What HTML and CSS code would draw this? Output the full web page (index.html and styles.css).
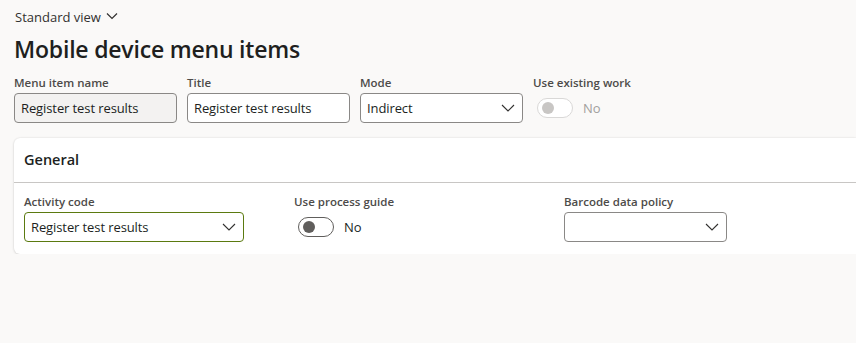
FILE: index.html
```html
<!DOCTYPE html>
<html>
<head>
<meta charset="utf-8">
<link rel="stylesheet" href="styles.css">
</head>
<body>
<div class="page">
  <div class="viewbar">Standard view
    <svg class="chev" width="12" height="8" viewBox="0 0 12 8"><path d="M1 1.5 L6 6.5 L11 1.5" fill="none" stroke="#323130" stroke-width="1.2"/></svg>
  </div>
  <h1 class="title">Mobile device menu items</h1>
  <div class="toprow">
    <div class="field">
      <div class="label">Menu item name</div>
      <div class="input readonly">Register test results</div>
    </div>
    <div class="field">
      <div class="label">Title</div>
      <div class="input">Register test results</div>
    </div>
    <div class="field">
      <div class="label">Mode</div>
      <div class="input select">Indirect
        <svg class="dd" width="14" height="8" viewBox="0 0 14 8"><path d="M1 1 L7 7 L13 1" fill="none" stroke="#323130" stroke-width="1.1"/></svg>
      </div>
    </div>
    <div class="field">
      <div class="label">Use existing work</div>
      <div class="togglewrap disabled">
        <span class="toggle"><span class="knob"></span></span>
        <span class="tval">No</span>
      </div>
    </div>
  </div>
  <div class="card">
    <div class="cardhead">General</div>
    <div class="cardbody">
      <div class="field">
        <div class="label">Activity code</div>
        <div class="input select focus wide">Register test results
          <svg class="dd" width="14" height="8" viewBox="0 0 14 8"><path d="M1 1 L7 7 L13 1" fill="none" stroke="#323130" stroke-width="1.1"/></svg>
        </div>
      </div>
      <div class="field">
        <div class="label">Use process guide</div>
        <div class="togglewrap">
          <span class="toggle"><span class="knob"></span></span>
          <span class="tval">No</span>
        </div>
      </div>
      <div class="field">
        <div class="label">Barcode data policy</div>
        <div class="input select">
          <svg class="dd" width="14" height="8" viewBox="0 0 14 8"><path d="M1 1 L7 7 L13 1" fill="none" stroke="#323130" stroke-width="1.1"/></svg>
        </div>
      </div>
    </div>
  </div>
</div>
</body>
</html>
```
FILE: styles.css
```css
html, body {
  margin: 0;
  padding: 0;
  background: #faf9f8;
  font-family: "Open Sans", "Noto Sans", sans-serif;
  color: #201f1e;
  overflow: hidden;
}
.page {
  padding: 8px 0 0 14px;
}
.viewbar {
  font-size: 13px;
  color: #323130;
  height: 18px;
  line-height: 18px;
  padding-left: 1px;
  display: flex;
  align-items: center;
  gap: 5px;
}
.chev { margin-top: -2px; }
.title {
  margin: 7px 0 0 0;
  font-size: 23px;
  font-weight: 600;
  line-height: 32px;
  height: 34px;
  letter-spacing: -0.2px;
}
.toprow {
  display: flex;
  gap: 10px;
  margin-top: 8px;
}
.field {
  display: flex;
  flex-direction: column;
  width: 163px;
}
.label {
  font-size: 11.5px;
  font-weight: 600;
  color: #4d4b49;
  line-height: 16px;
  height: 16px;
  margin-bottom: 2px;
}
.input {
  box-sizing: border-box;
  height: 30px;
  border: 1px solid #8a8886;
  border-radius: 4px;
  background: #fff;
  font-size: 13px;
  line-height: 28px;
  padding: 0 6px;
  color: #201f1e;
  display: flex;
  align-items: center;
  letter-spacing: -0.1px;
}
.input.readonly { background: #f3f2f1; }
.select { justify-content: space-between; }
.dd { margin-left: auto; margin-right: 1px; }
.input.focus { border-color: #5b7a10; }
.input.wide { width: 220px; }
.togglewrap {
  display: flex;
  align-items: center;
  height: 30px;
  gap: 10px;
  padding-left: 4px;
}
.toggle {
  box-sizing: border-box;
  width: 36px;
  height: 20px;
  border: 1px solid #605e5c;
  border-radius: 10px;
  background: #fff;
  display: flex;
  align-items: center;
  padding-left: 4px;
}
.knob {
  width: 12px;
  height: 12px;
  border-radius: 50%;
  background: #605e5c;
}
.tval { font-size: 13px; color: #201f1e; }
.disabled .toggle { border-color: #d9d8d7; }
.disabled .knob { background: #c8c6c4; }
.disabled .tval { color: #a19f9d; }
.card {
  margin-top: 15px;
  background: #fff;
  border-radius: 6px 0 0 6px;
  box-shadow: 0 0 2px rgba(0,0,0,0.12), 0 1px 3px rgba(0,0,0,0.10);
}
.cardhead {
  height: 44px;
  line-height: 44px;
  padding-left: 10px;
  font-size: 14.5px;
  font-weight: 600;
  border-bottom: 1px solid #c8c6c4;
}
.cardbody {
  display: grid;
  grid-template-columns: 270px 270px 270px;
  padding: 11px 10px 12px 10px;
}
.cardbody .field:nth-child(1) { width: 220px; }
```
